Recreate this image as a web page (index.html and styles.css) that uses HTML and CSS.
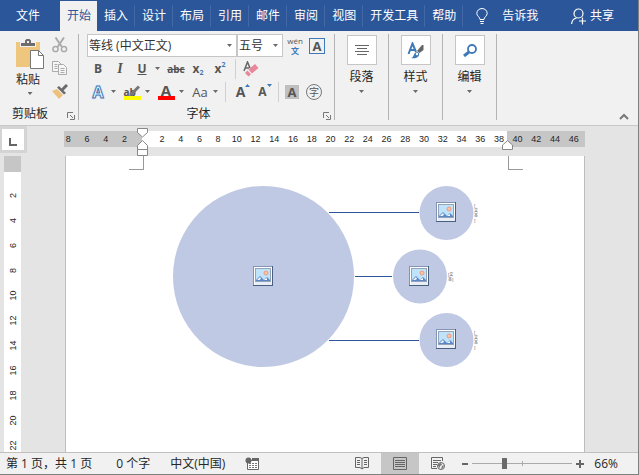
FILE: index.html
```html
<!DOCTYPE html>
<html lang="zh-CN">

<head>
    <meta charset="UTF-8">
    <meta name="viewport" content="width=device-width, initial-scale=1.0">
    <title>Word</title>
    <link rel="stylesheet" href="styles.css">
</head>

<body>
    <svg class="defs" width="0" height="0">
        <symbol id="picture" viewBox="0 0 20 20">
            <path fill="#8494b4" d="M0 0h20v20H0z" />
            <path fill="#4a5e7e" d="M19 0h1v20H0v-1h19z" />
            <path fill="#fff" d="M1 1h18v18H1z" />
            <path fill="#e9eef6" d="M2 16h17v3H2z" />
            <path fill="#94a4b8" d="M2 2h16v14H2z" />
            <path fill="#bfe3fb" d="M3 3h14v12H3z" />
            <circle cx="13" cy="7" r="2" fill="#fbc6a6" stroke="#f09a7c" />
            <path fill="#5b86c8" d="M3 15v-1l4-4 3 3 1 1 3-3 3 3v1z" />
            <path fill="#fff" d="M4 14l3-3 1 2-2 1zM11 14l3-2v2z" />
        </symbol>
    </svg>

    <div class="app">
        <nav class="tabs">
            <button class="tab file">文件</button>
            <button class="tab active">开始</button>
            <button class="tab">插入</button>
            <button class="tab">设计</button>
            <button class="tab">布局</button>
            <button class="tab">引用</button>
            <button class="tab">邮件</button>
            <button class="tab">审阅</button>
            <button class="tab">视图</button>
            <button class="tab">开发工具</button>
            <button class="tab">帮助</button>
            <button class="tell-me">
                <svg width="12" height="16" viewBox="0 0 12 16" fill="none" stroke="#fff">
                    <path d="M4 11.500C4 9 .8 8 .8 5.500a5.200 5 0 0 1 10.400 0C11.200 8 8 9 8 11.500zM4 13.500h4M4.500 15.500h3" />
                </svg>
                告诉我
            </button>
            <button class="share">
                <svg width="16" height="17" viewBox="0 0 16 17" fill="none" stroke="#fff" stroke-width="1.200">
                    <circle cx="7.500" cy="5.500" r="4.500" />
                    <path d="M.6 16c.2-3.500 2.400-5.400 5-6M8 13h7M11.500 9.500v7" />
                </svg>
                共享
            </button>
        </nav>

        <div class="ribbon">
            <section class="group clipboard">
                <div class="clipboard-tools">
                    <button class="paste">
                        <svg width="28" height="31" viewBox="0 0 28 31">
                            <path fill="#eec67e" d="M0 3h24v25H0z" />
                            <path fill="#f1f1f1" d="M4 2h16v6H4z" />
                            <path fill="#6d6d6d" d="M5 4h4V1.500L10.500 0h3L15 1.500V4h4v3H5z" />
                            <path fill="#f1f1f1" d="M11 2h2v2h-2z" />
                            <path fill="#fff" stroke="#777" d="M14.500 11.500h8l5 5v13h-13z" />
                            <path fill="none" stroke="#777" d="M22.500 11.500v5h5" />
                        </svg>
                        <span>粘贴</span>
                        <i class="caret"></i>
                    </button>
                    <div class="clipboard-side">
                        <button class="tool" aria-label="剪切">
                            <svg width="16" height="16" viewBox="0 0 16 16" fill="none" stroke="#ababab" stroke-width="1.500">
                                <circle cx="3.500" cy="12" r="2.600" />
                                <circle cx="12" cy="12" r="2.600" />
                                <path stroke-width="2" d="M3.500 0.500l6.500 9.500M12 .5L5.500 10" />
                            </svg>
                        </button>
                        <button class="tool" aria-label="复制">
                            <svg width="16" height="15" viewBox="0 0 16 15" fill="#f6f6f6" stroke="#ababab">
                                <path d="M.5.5h6l3 3v7h-9zM2.500 3.500h3M2.500 5.500h3M2.500 7.500h3" />
                                <path d="M6.500 3.500h5l3 3v7h-8zM8.500 7.500h4M8.500 9.500h4M8.500 11.500h4" />
                            </svg>
                        </button>
                        <button class="tool" aria-label="格式刷">
                            <svg width="16" height="15" viewBox="0 0 16 15">
                                <path fill="#eec07c" d="M0 7l5-2 6 6-4 4z" />
                                <path fill="#6b6b6b" d="M5 3.500l2-1.500 7 7-2 1.500z" />
                                <path stroke="#6b6b6b" stroke-width="3" d="M10 6l5-5" />
                            </svg>
                        </button>
                    </div>
                </div>
                <div class="group-name">
                    <span>剪贴板</span>
                    <button class="launcher" aria-label="剪贴板选项">
                        <svg width="8" height="8" viewBox="0 0 8 8" fill="none" stroke="#777">
                            <path d="M.5 6V.5H6M3 3l3 3M7.500 3v4.500H3" />
                        </svg>
                    </button>
                </div>
            </section>

            <section class="group font">
                <div class="row">
                    <div class="combo combo-font">
                        <select aria-label="字体">
                            <option>等线 (中文正文)</option>
                        </select>
                        <i class="caret"></i>
                    </div>
                    <div class="combo combo-size">
                        <select aria-label="字号">
                            <option>五号</option>
                        </select>
                        <i class="caret"></i>
                    </div>
                    <button class="tool pinyin"><span>wén</span><b>文</b></button>
                    <button class="tool"><span class="boxed">A</span></button>
                </div>
                <div class="row">
                    <button class="tool bold">B</button>
                    <button class="tool italic">I</button>
                    <button class="tool underline">U</button>
                    <button class="more" aria-label="下划线样式"><i class="caret"></i></button>
                    <button class="tool strike">abc</button>
                    <button class="tool bold">x<sub>2</sub></button>
                    <button class="tool bold">x<sup>2</sup></button>
                    <span class="line"></span>
                    <button class="tool eraser" aria-label="清除所有格式">
                        <svg width="16" height="16" viewBox="0 0 16 16">
                            <path fill="none" stroke="#666" stroke-width="1.500" d="M1 10L4.500 1 7 7M2.500 7H6" />
                            <path fill="#e8869a" d="M5.500 8.500L12 3l3.500 4L9 12.500z" />
                            <path fill="#e8869a" d="M4.500 9.500L8 13.200 5.500 15.500 2 12z" />
                        </svg>
                    </button>
                </div>
                <div class="row">
                    <button class="tool effects">A</button>
                    <button class="more" aria-label="文本效果"><i class="caret"></i></button>
                    <button class="tool highlight">
                        <span>ab</span>
                        <svg width="17" height="17" viewBox="0 0 17 17">
                            <path stroke="#777" stroke-width="3" d="M7 11.500L15 3.500" />
                            <path fill="#777" d="M5 13l1-4 3 3z" />
                            <path fill="#ff0" d="M0 13h17v4H0z" />
                        </svg>
                    </button>
                    <button class="more" aria-label="突出显示颜色"><i class="caret"></i></button>
                    <button class="tool"><span class="colour">A</span></button>
                    <button class="more" aria-label="字体颜色"><i class="caret"></i></button>
                    <button class="tool case">Aa</button>
                    <button class="more" aria-label="更改大小写"><i class="caret"></i></button>
                    <span class="line tight"></span>
                    <button class="tool grow">A<svg width="5" height="3" viewBox="0 0 5 3"><path fill="#3f79b8" d="M0 3l2.500-3L5 3z" /></svg></button>
                    <button class="tool shrink">A<svg width="5" height="3" viewBox="0 0 5 3"><path fill="#3f79b8" d="M0 0h5L2.500 3z" /></svg></button>
                    <span class="line tight"></span>
                    <button class="tool"><span class="shaded">A</span></button>
                    <button class="tool"><span class="circled">字</span></button>
                </div>
                <div class="group-name">
                    <span>字体</span>
                    <button class="launcher" aria-label="字体选项">
                        <svg width="8" height="8" viewBox="0 0 8 8" fill="none" stroke="#777">
                            <path d="M.5 6V.5H6M3 3l3 3M7.500 3v4.500H3" />
                        </svg>
                    </button>
                </div>
            </section>

            <section class="group folded">
                <button class="fold">
                    <span class="tile">
                        <svg width="14" height="12" viewBox="0 0 14 12" stroke="#666">
                            <path d="M0 1.500h14M2 4.500h10M0 7.500h14M2 10.500h10" />
                        </svg>
                    </span>
                    <span>段落</span>
                    <i class="caret"></i>
                </button>
            </section>
            <section class="group folded">
                <button class="fold">
                    <span class="tile">
                        <svg width="17" height="17" viewBox="0 0 17 17">
                            <path fill="none" stroke="#3f79b8" stroke-width="2" d="M1.500 12L5.500 1.500 9 10M3 8h5" />
                            <path fill="#666" d="M10 9l5-6 1.500 0v5l-4 3z" />
                            <path fill="#3f79b8" d="M4 16c3 0 2-5 6-6 3 0 3 4 0 5.500-2 1-4 1-6 .5z" />
                            <circle cx="10" cy="12" r="1.200" fill="#fff" />
                        </svg>
                    </span>
                    <span>样式</span>
                    <i class="caret"></i>
                </button>
            </section>
            <section class="group folded">
                <button class="fold">
                    <span class="tile">
                        <svg width="14" height="13" viewBox="0 0 14 13" fill="none" stroke="#3f79b8">
                            <circle cx="9" cy="5" r="4" stroke-width="1.800" />
                            <path stroke-width="3" d="M6 8l-5 4" />
                        </svg>
                    </span>
                    <span>编辑</span>
                    <i class="caret"></i>
                </button>
            </section>
            <button class="collapse" aria-label="折叠功能区">
                <svg width="10" height="7" viewBox="0 0 10 7" fill="none" stroke="#777" stroke-width="2">
                    <path d="M1 6l4-4 4 4" />
                </svg>
            </button>
        </div>

        <main class="workspace">
            <aside class="side">
                <button class="tab-stop" aria-label="制表符">
                    <svg width="8" height="8" viewBox="0 0 8 8" fill="none" stroke="#666" stroke-width="2">
                        <path d="M1 0v7h7" />
                    </svg>
                </button>
                <ol class="v-ruler">
                    <li>2</li>
                    <li>4</li>
                    <li>6</li>
                    <li>8</li>
                    <li>10</li>
                    <li>12</li>
                    <li>14</li>
                    <li>16</li>
                    <li>18</li>
                    <li>20</li>
                    <li>22</li>
                </ol>
            </aside>
            <div class="document">
                <div class="h-ruler">
                    <ol>
                        <li>8</li>
                        <li>6</li>
                        <li>4</li>
                        <li>2</li>
                        <li></li>
                        <li>2</li>
                        <li>4</li>
                        <li>6</li>
                        <li>8</li>
                        <li>10</li>
                        <li>12</li>
                        <li>14</li>
                        <li>16</li>
                        <li>18</li>
                        <li>20</li>
                        <li>22</li>
                        <li>24</li>
                        <li>26</li>
                        <li>28</li>
                        <li>30</li>
                        <li>32</li>
                        <li>34</li>
                        <li>36</li>
                        <li>38</li>
                        <li>40</li>
                        <li>42</li>
                        <li>44</li>
                        <li>46</li>
                    </ol>
                    <svg class="indent-left" width="11" height="28" viewBox="0 0 11 28" fill="#fff" stroke="#888">
                        <path d="M.5.5h10v4l-5 4.500-5-4.500zM5.500 12.500l5 5v4H.5v-4zM.5 21.500h10v6H.5z" />
                    </svg>
                    <svg class="indent-right" width="11" height="10" viewBox="0 0 11 10" fill="#fff" stroke="#888">
                        <path d="M5.500.7l5 4.300v4.500H.5V5z" />
                    </svg>
                </div>
                <article class="page">
                    <div class="margins">
                        <span class="corner left"></span>
                        <span class="corner right"></span>
                    </div>
                    <svg class="diagram" width="306" height="184" viewBox="172 185 306 184">
                        <g fill="#bfc9e4">
                            <circle cx="263.500" cy="276.500" r="90.500" />
                            <circle cx="446.500" cy="213" r="27" />
                            <circle cx="420" cy="276.500" r="27" />
                            <circle cx="446.500" cy="340" r="27" />
                        </g>
                        <path stroke="#2b579a" d="M329 212.500h90M355 276.500h37M329 340.500h90" />
                        <use href="#picture" x="253" y="266" width="20" height="20" />
                        <use href="#picture" x="436" y="202" width="20" height="20" />
                        <use href="#picture" x="409" y="266" width="20" height="20" />
                        <use href="#picture" x="436" y="329" width="20" height="20" />
                        <g class="node-text">
                            <text><tspan x="474" y="207">[</tspan><tspan x="474" y="212">文</tspan><tspan x="474" y="217">本</tspan><tspan x="474" y="222">]</tspan></text>
                            <text><tspan x="448" y="276">[文</tspan><tspan x="448" y="281">本]</tspan></text>
                            <text><tspan x="474" y="334">[</tspan><tspan x="474" y="339">文</tspan><tspan x="474" y="344">本</tspan><tspan x="474" y="349">]</tspan></text>
                        </g>
                    </svg>
                </article>
            </div>
        </main>

        <footer class="status">
            <span class="pages">第 1 页，共 1 页</span>
            <span class="words">0 个字</span>
            <span class="language">中文(中国)</span>
            <button class="macro" aria-label="宏录制">
                <svg width="14" height="14" viewBox="0 0 14 14">
                    <path fill="#fff" stroke="#666" d="M2.500 3.500h11v9h-11z" />
                    <path fill="#666" d="M7 1h7v3H7z" />
                    <path stroke="#777" stroke-dasharray="2 1" d="M4 6.500h8M4 8.500h8M4 10.500h8" />
                    <circle cx="3.500" cy="3.500" r="3" fill="#666" />
                </svg>
            </button>
            <div class="views">
                <button aria-label="阅读视图">
                    <svg width="14" height="13" viewBox="0 0 14 13" fill="none" stroke="#666">
                        <path d="M7 1.500L5 .5H.5v10H5l2 1.500 2-1.500h4.500V.5H9l-2 1zM7 1.500V12M2 3.500h3M2 5.500h3M2 7.500h3M9 3.500h3M9 5.500h3M9 7.500h3" />
                    </svg>
                </button>
                <button class="current" aria-label="页面视图">
                    <svg width="14" height="13" viewBox="0 0 14 13" fill="none" stroke="#666">
                        <path d="M.5.5h13v12H.5zM2 3.500h10M2 5.500h10M2 7.500h10M2 9.500h10" />
                    </svg>
                </button>
                <button aria-label="Web 版式视图">
                    <svg width="14" height="13" viewBox="0 0 14 13" fill="none" stroke="#666">
                        <path d="M6 11.500H.5V.5h11V4M2 3.500h8M2 5.500h5M2 7.500h4M2 9.500h3" />
                        <circle cx="10" cy="9" r="3.500" fill="#f1f1f1" />
                        <path fill="#777" stroke="none" d="M7 7l3-1 1 2-2 1v2L7 9zM11 9l2-1-1 3-2 1z" />
                    </svg>
                </button>
            </div>
            <button class="zoom-step" aria-label="缩小">
                <svg width="8" height="8" viewBox="0 0 8 8" stroke="#666" stroke-width="2"><path d="M1 4h6" /></svg>
            </button>
            <input class="zoom" type="range" min="10" max="190" value="66" aria-label="显示比例">
            <button class="zoom-step" aria-label="放大">
                <svg width="8" height="8" viewBox="0 0 8 8" stroke="#666" stroke-width="2"><path d="M0 4h8M4 0v8" /></svg>
            </button>
            <span class="percent">66%</span>
        </footer>
    </div>
</body>

</html>
```
FILE: styles.css
```css
* {
    box-sizing: border-box;
}

html,
body {
    margin: 0;
    height: 100%;
    font-family: 'Open Sans', 'Noto Sans CJK SC', sans-serif;
    font-size: 12px;
    line-height: 16px;
    color: #262626;
    background: #f1f1f1;
}

button {
    margin: 0;
    padding: 0;
    border: none;
    background: none;
    color: inherit;
    font: inherit;
    white-space: nowrap;
}

svg {
    display: block;
    flex: none;
}

ol {
    margin: 0;
    padding: 0;
    list-style: none;
}

.defs {
    position: absolute;
}

.app {
    display: flex;
    flex-direction: column;
    height: 100vh;
    border-right: 1px solid #808080;
    border-bottom: 1px solid #808080;
    overflow: hidden;
}

/* Tabs */
.tabs {
    display: flex;
    align-items: center;
    flex: none;
    height: 31px;
    padding-top: 1px;
    background: #2b579a;
    color: #fff;
}

.tab {
    display: flex;
    align-items: center;
    height: 22px;
    padding: 0 6px 0 7px;
    border-right: 1px solid #4269a6;
}

.tab.file {
    padding: 0 20px 0 16px;
    border: none;
}

.tab.active {
    height: 30px;
    background: #f1f1f1;
    color: #2b579a;
    border: none;
}

.tell-me,
.share {
    display: flex;
    align-items: center;
}

.tell-me {
    gap: 14px;
    margin-left: 13px;
}

.share {
    gap: 3px;
    margin-left: auto;
    margin-right: 24px;
}

/* Ribbon */
.ribbon {
    display: flex;
    flex: none;
    height: 95px;
    padding: 3px 0 5px;
    border-bottom: 1px solid #c8c8c8;
    background: #f1f1f1;
}

.group {
    display: flex;
    flex-direction: column;
    border-right: 1px solid #b4b4b4;
}

.group-name {
    display: flex;
    justify-content: center;
    position: relative;
    margin-top: auto;
    line-height: 12px;
}

.launcher {
    position: absolute;
    right: 3px;
    bottom: 0;
}

.caret {
    flex: none;
    width: 5px;
    height: 3px;
    background: #6a6a6a;
    clip-path: polygon(0 0, 100% 0, 50% 100%);
}

.tool {
    display: flex;
    align-items: center;
    justify-content: center;
    width: 22px;
    height: 22px;
    color: #555;
}

.more {
    display: flex;
    align-items: center;
    width: 12px;
    height: 22px;
    padding-left: 2px;
}

.clipboard {
    width: 79px;
}

.clipboard .group-name {
    justify-content: flex-start;
    padding-left: 12px;
}

.clipboard-tools {
    display: flex;
    gap: 5px;
    padding-left: 16px;
}

.paste {
    display: flex;
    flex-direction: column;
    align-items: center;
    width: 28px;
    padding-top: 5px;
}

.paste span {
    margin: 2px 4px 4px 0;
}

.clipboard-side {
    display: flex;
    flex-direction: column;
    gap: 1px;
}

.font {
    width: 256px;
    padding-left: 8px;
}

.font .group-name {
    padding-right: 24px;
}

.row {
    display: flex;
    align-items: center;
    height: 23px;
}

.combo {
    display: flex;
    align-items: center;
    height: 23px;
    padding-right: 4px;
    border: 1px solid #c6c6c6;
    background: #fff;
}

.combo select {
    flex: 1;
    min-width: 0;
    padding: 0 0 0 1px;
    border: none;
    background: none;
    color: #333;
    font: inherit;
    appearance: none;
}

.combo-font {
    width: 150px;
}

.combo-size {
    width: 46px;
}

.pinyin {
    flex-direction: column;
    gap: 1px;
    margin-left: 1px;
    line-height: 9px;
    font-size: 8px;
}

.pinyin b {
    color: #3f79b8;
}

.boxed,
.shaded,
.circled {
    width: 16px;
    height: 16px;
    line-height: 14px;
    font-weight: bold;
    font-size: 13px;
}

.boxed {
    border: 1px solid #3f79b8;
}

.shaded {
    width: 14px;
    height: 14px;
    background: #bfbfbf;
}

.circled {
    border: 1px solid #777;
    border-radius: 50%;
    font-weight: normal;
    font-size: 10px;
}

.bold {
    font-weight: bold;
}

.italic {
    font-family: 'Liberation Serif', serif;
    font-style: italic;
    font-weight: bold;
    font-size: 14px;
}

.underline {
    font-weight: bold;
    text-decoration: underline;
}

.strike {
    font-size: 10px;
    font-weight: bold;
    text-decoration: line-through;
}

.bold sub,
.bold sup {
    color: #3f79b8;
    font-size: 7px;
    line-height: 8px;
}

.bold sub {
    align-self: flex-end;
    margin-bottom: 3px;
}

.bold sup {
    align-self: flex-start;
    margin-top: 3px;
}

.line {
    width: 1px;
    height: 20px;
    margin: 0 4px;
    background: #d0d0d0;
}

.line.tight {
    margin: 0 2px;
}

.effects {
    color: #fff;
    font-size: 16px;
    font-weight: bold;
    -webkit-text-stroke: 1px #3f79b8;
    text-shadow: 0 0 2px #7fb0e0;
}

.highlight {
    display: grid;
    justify-items: start;
    justify-content: center;
    align-content: center;
    font-size: 10px;
    font-weight: bold;
    line-height: 12px;
}

.highlight > * {
    grid-area: 1 / 1;
}

.colour {
    width: 17px;
    height: 16px;
    border-bottom: 4px solid #f00;
    font-size: 15px;
    font-weight: bold;
    line-height: 12px;
}

.case {
    font-size: 13px;
}

.grow,
.shrink {
    font-size: 14px;
    font-weight: bold;
}

.shrink {
    font-size: 12px;
}

.grow svg,
.shrink svg {
    align-self: flex-start;
    margin-top: 3px;
}

.line.tight + .grow {
    margin-left: 4px;
}

.folded {
    width: 54px;
}

.fold {
    display: flex;
    flex-direction: column;
    align-items: center;
    padding-top: 1px;
}

.tile {
    display: flex;
    align-items: center;
    justify-content: center;
    width: 30px;
    height: 30px;
    margin-bottom: 4px;
    border: 1px solid #c6c6c6;
    background: #fff;
}

.fold .caret {
    margin-top: 5px;
}

.collapse {
    align-self: flex-end;
    margin-left: auto;
    margin-right: 9px;
}

/* Rulers and page */
.workspace {
    display: flex;
    flex: 1;
    min-height: 0;
    background: #e4e4e4;
}

.side {
    display: flex;
    flex-direction: column;
    width: 27px;
    overflow: hidden;
}

.tab-stop {
    display: flex;
    flex: none;
    align-items: flex-end;
    justify-content: center;
    width: 27px;
    height: 27px;
    padding-bottom: 4px;
    border: 3px solid #d4d4d4;
    border-left-width: 2px;
    background: #fff;
}

.v-ruler {
    flex: 1;
    width: 17px;
    margin: 3px 0 0 4px;
    padding-top: 11px;
    border-top: 16px solid #c6c6c6;
    background: #fff;
    font-family: 'Liberation Sans', sans-serif;
    font-size: 9px;
}

.v-ruler li {
    display: flex;
    align-items: center;
    justify-content: center;
    width: 17px;
    height: 25px;
    transform: rotate(-90deg);
}

.document {
    display: flex;
    flex: 1;
    flex-direction: column;
    padding: 5px 53px 0 37px;
}

.h-ruler {
    position: relative;
    flex: none;
    height: 16px;
    margin-bottom: 9px;
    border-left: 78px solid #c6c6c6;
    border-right: 78px solid #c6c6c6;
    background: #fff;
    font-family: 'Liberation Sans', sans-serif;
    font-size: 9px;
}

.h-ruler ol {
    display: flex;
    margin: 0 -76px 0 -83px;
}

.h-ruler li {
    flex: 1 1 0;
    text-align: center;
}

.indent-left {
    position: absolute;
    left: -5px;
    top: -3px;
}

.indent-right {
    position: absolute;
    right: -6px;
    top: 9px;
}

.page {
    display: flex;
    flex: 1;
    flex-direction: column;
    align-items: center;
    min-height: 0;
    margin-left: 1px;
    border: solid #bdbdbd;
    border-width: 0 1px;
    background: #fff;
    overflow: hidden;
}

.margins {
    display: flex;
    justify-content: space-between;
    align-self: stretch;
    padding: 0 61px 0 63px;
}

.corner {
    width: 15px;
    height: 14px;
    border-bottom: 1px solid #999;
}

.corner.left {
    border-right: 1px solid #999;
}

.corner.right {
    border-left: 1px solid #999;
}

.diagram {
    margin-top: 15px;
}

.node-text {
    fill: #444;
    font-size: 4px;
}

/* Status bar */
.status {
    display: flex;
    flex: none;
    align-items: center;
    height: 22px;
    padding-left: 6px;
    border-top: 1px solid #c0c0c0;
    background: #f1f1f1;
}

.pages {
    margin-right: 24px;
}

.words {
    margin-right: 20px;
}

.language {
    margin-right: 20px;
}

.views {
    display: flex;
    align-self: stretch;
    margin-left: auto;
}

.views button {
    display: flex;
    align-items: center;
    justify-content: center;
    width: 38px;
}

.views .current {
    background: #c6c6c6;
}

.zoom-step {
    margin-left: 4px;
}

.zoom {
    width: 100px;
    height: 16px;
    margin: 0 0 0 3px;
    appearance: none;
    background:
        linear-gradient(#aaa, #aaa) center / 1px 5px no-repeat,
        linear-gradient(#aaa, #aaa) center / 100% 1px no-repeat;
}

.zoom::-webkit-slider-thumb {
    appearance: none;
    width: 5px;
    height: 11px;
    background: #6a6a6a;
}

.percent {
    margin: 0 20px 0 10px;
}
```
